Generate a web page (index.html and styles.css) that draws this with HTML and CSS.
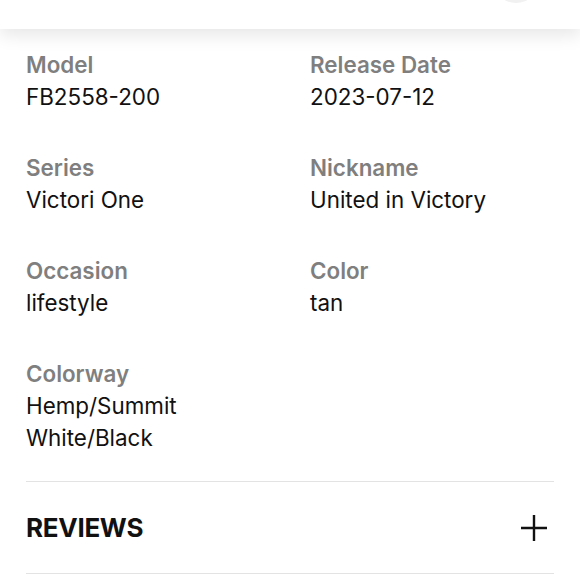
FILE: index.html
```html
<!DOCTYPE html>
<html lang="en">
<head>
<meta charset="UTF-8">
<meta name="viewport" content="width=device-width, initial-scale=1.0">
<title>Product details</title>
<link rel="stylesheet" href="styles.css">
</head>
<body>

<!-- Top bar (scrolled, only its bottom is visible) -->
<header class="top-bar">
    <span class="round-button"></span>
</header>

<main class="details">

    <!-- Spec grid -->
    <dl class="specs">
        <div class="spec">
            <dt>Model</dt>
            <dd>FB2558-200</dd>
        </div>
        <div class="spec">
            <dt>Release Date</dt>
            <dd>2023-07-12</dd>
        </div>
        <div class="spec">
            <dt>Series</dt>
            <dd>Victori One</dd>
        </div>
        <div class="spec">
            <dt>Nickname</dt>
            <dd>United in Victory</dd>
        </div>
        <div class="spec">
            <dt>Occasion</dt>
            <dd>lifestyle</dd>
        </div>
        <div class="spec">
            <dt>Color</dt>
            <dd>tan</dd>
        </div>
        <div class="spec">
            <dt>Colorway</dt>
            <dd>Hemp/Summit<br>White/Black</dd>
        </div>
    </dl>

    <!-- Reviews accordion -->
    <section class="accordion">
        <h2>REVIEWS</h2>
        <svg class="plus" width="28" height="28" viewBox="0 0 28 28">
            <path d="M14 1v26M1 14h26" stroke="#111" stroke-width="2.4" fill="none"/>
        </svg>
    </section>

</main>

</body>
</html>
```

FILE: styles.css
```css
/* Base */
body {
    margin: 0;
    padding: 0;
    background: #fff;
    font-family: Inter, "Noto Sans", Arial, sans-serif;
    color: #111;
}

/* TOP BAR */
.top-bar {
    height: 29px;
    background: #fff;
    box-shadow: 0 6px 18px rgba(0, 0, 0, 0.10);
    display: flex;
    justify-content: flex-end;
    padding-right: 41px;
    overflow: hidden;
    position: relative;
    z-index: 1;
}
.round-button {
    width: 46px;
    height: 46px;
    margin-top: -43px;
    border-radius: 50%;
    background: #f1f1f1;
}

/* DETAILS */
.details {
    padding: 20px 26px 0 26px;
}
.specs {
    margin: 0;
    display: grid;
    grid-template-columns: 1fr 1fr;
    column-gap: 40px;
    row-gap: 39px;
}
.spec dt {
    font-size: 22.4px;
    line-height: 32px;
    font-weight: 600;
    color: #7f7f7f;
}
.spec dd {
    margin: 0;
    font-size: 22.4px;
    line-height: 32px;
    color: #111;
}

/* ACCORDION */
.accordion {
    margin-top: 27px;
    border-top: 1px solid #e3e3e3;
    border-bottom: 1px solid #e3e3e3;
    height: 91px;
    display: flex;
    align-items: center;
    justify-content: space-between;
    padding-right: 6px;
}
.accordion h2 {
    margin: 0;
    font-size: 26px;
    font-weight: 700;
    letter-spacing: -0.3px;
}
```
